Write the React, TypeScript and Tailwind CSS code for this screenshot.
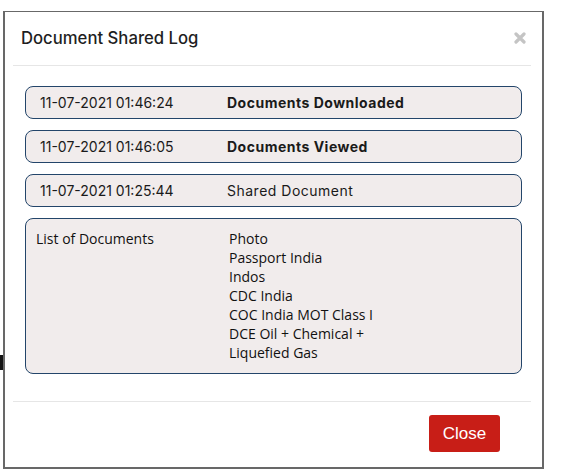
import React from "react";

const logs = [
  { at: "11-07-2021 01:46:24", action: "Documents Downloaded", bold: true },
  { at: "11-07-2021 01:46:05", action: "Documents Viewed", bold: true },
  { at: "11-07-2021 01:25:44", action: "Shared Document", bold: false },
];

const documents = [
  "Photo",
  "Passport India",
  "Indos",
  "CDC India",
  "COC India MOT Class I",
  "DCE Oil + Chemical + Liquefied Gas",
];

const poppins = { fontFamily: "Inter, 'Noto Sans', sans-serif" };
const listFont = { fontFamily: "'Open Sans', 'Noto Sans', sans-serif" };

function CloseIcon() {
  return (
    <svg width="12" height="12" viewBox="0 0 12 12" className="text-[#c4c4c4]">
      <path
        d="M2 2 L10 10 M10 2 L2 10"
        stroke="currentColor"
        strokeWidth="3.2"
        strokeLinecap="round"
      />
    </svg>
  );
}

export default function App() {
  return (
    <div className="relative min-h-[474px] bg-white pl-[3px] pt-[11px]">
      {/* something behind the modal peeking out at the left */}
      <div className="absolute left-0 top-[355px] h-[15px] w-[3px] bg-[#141414]" />

      <div className="flex h-[458px] w-[541px] flex-col border-x-2 border-b-2 border-t border-[#686868] bg-white">
        <div
          className="ml-2 mr-[11px] flex h-[54px] items-center justify-between border-b border-[#e6e6e6] pl-2 pr-[5px]"
          style={poppins}
        >
          <h4 className="text-[16.7px] font-medium text-[#1f1f1f]">
            Document Shared Log
          </h4>
          <button className="mt-[-2px]" title="Close">
            <CloseIcon />
          </button>
        </div>

        <div className="flex flex-col gap-[11px] px-[20px] pb-[27px] pt-[20px]">
          {logs.map((log) => (
            <div
              key={log.at}
              className="grid h-[33px] grid-cols-[187px_1fr] items-center rounded-[8px] border border-[#23456a] bg-[#f1ecec] pl-[14px] text-[14px] text-[#1a1a1a]"
              style={poppins}
            >
              <span>{log.at}</span>
              <span className={log.bold ? "font-bold tracking-[0.5px]" : "tracking-[0.5px]"}>
                {log.action}
              </span>
            </div>
          ))}

          <div
            className="grid h-[156px] grid-cols-[193px_1fr] rounded-[8px] border border-[#23456a] bg-[#f1ecec] pl-[10px] pt-[10px] text-[14px] leading-[19px] text-[#111]"
            style={listFont}
          >
            <span>List of Documents</span>
            <ul className="w-[160px]">
              {documents.map((doc) => (
                <li key={doc}>{doc}</li>
              ))}
            </ul>
          </div>
        </div>

        <div className="ml-2 mr-[11px] border-t border-[#e6e6e6]" />

        <div className="flex justify-end pr-[42px] pt-[13px]">
          <button
            className="h-[37px] w-[71px] rounded-[3px] bg-[#c81e17] text-[17px] text-white"
            style={{ fontFamily: "'Liberation Sans', Arial, sans-serif" }}
          >
            Close
          </button>
        </div>
      </div>
    </div>
  );
}
